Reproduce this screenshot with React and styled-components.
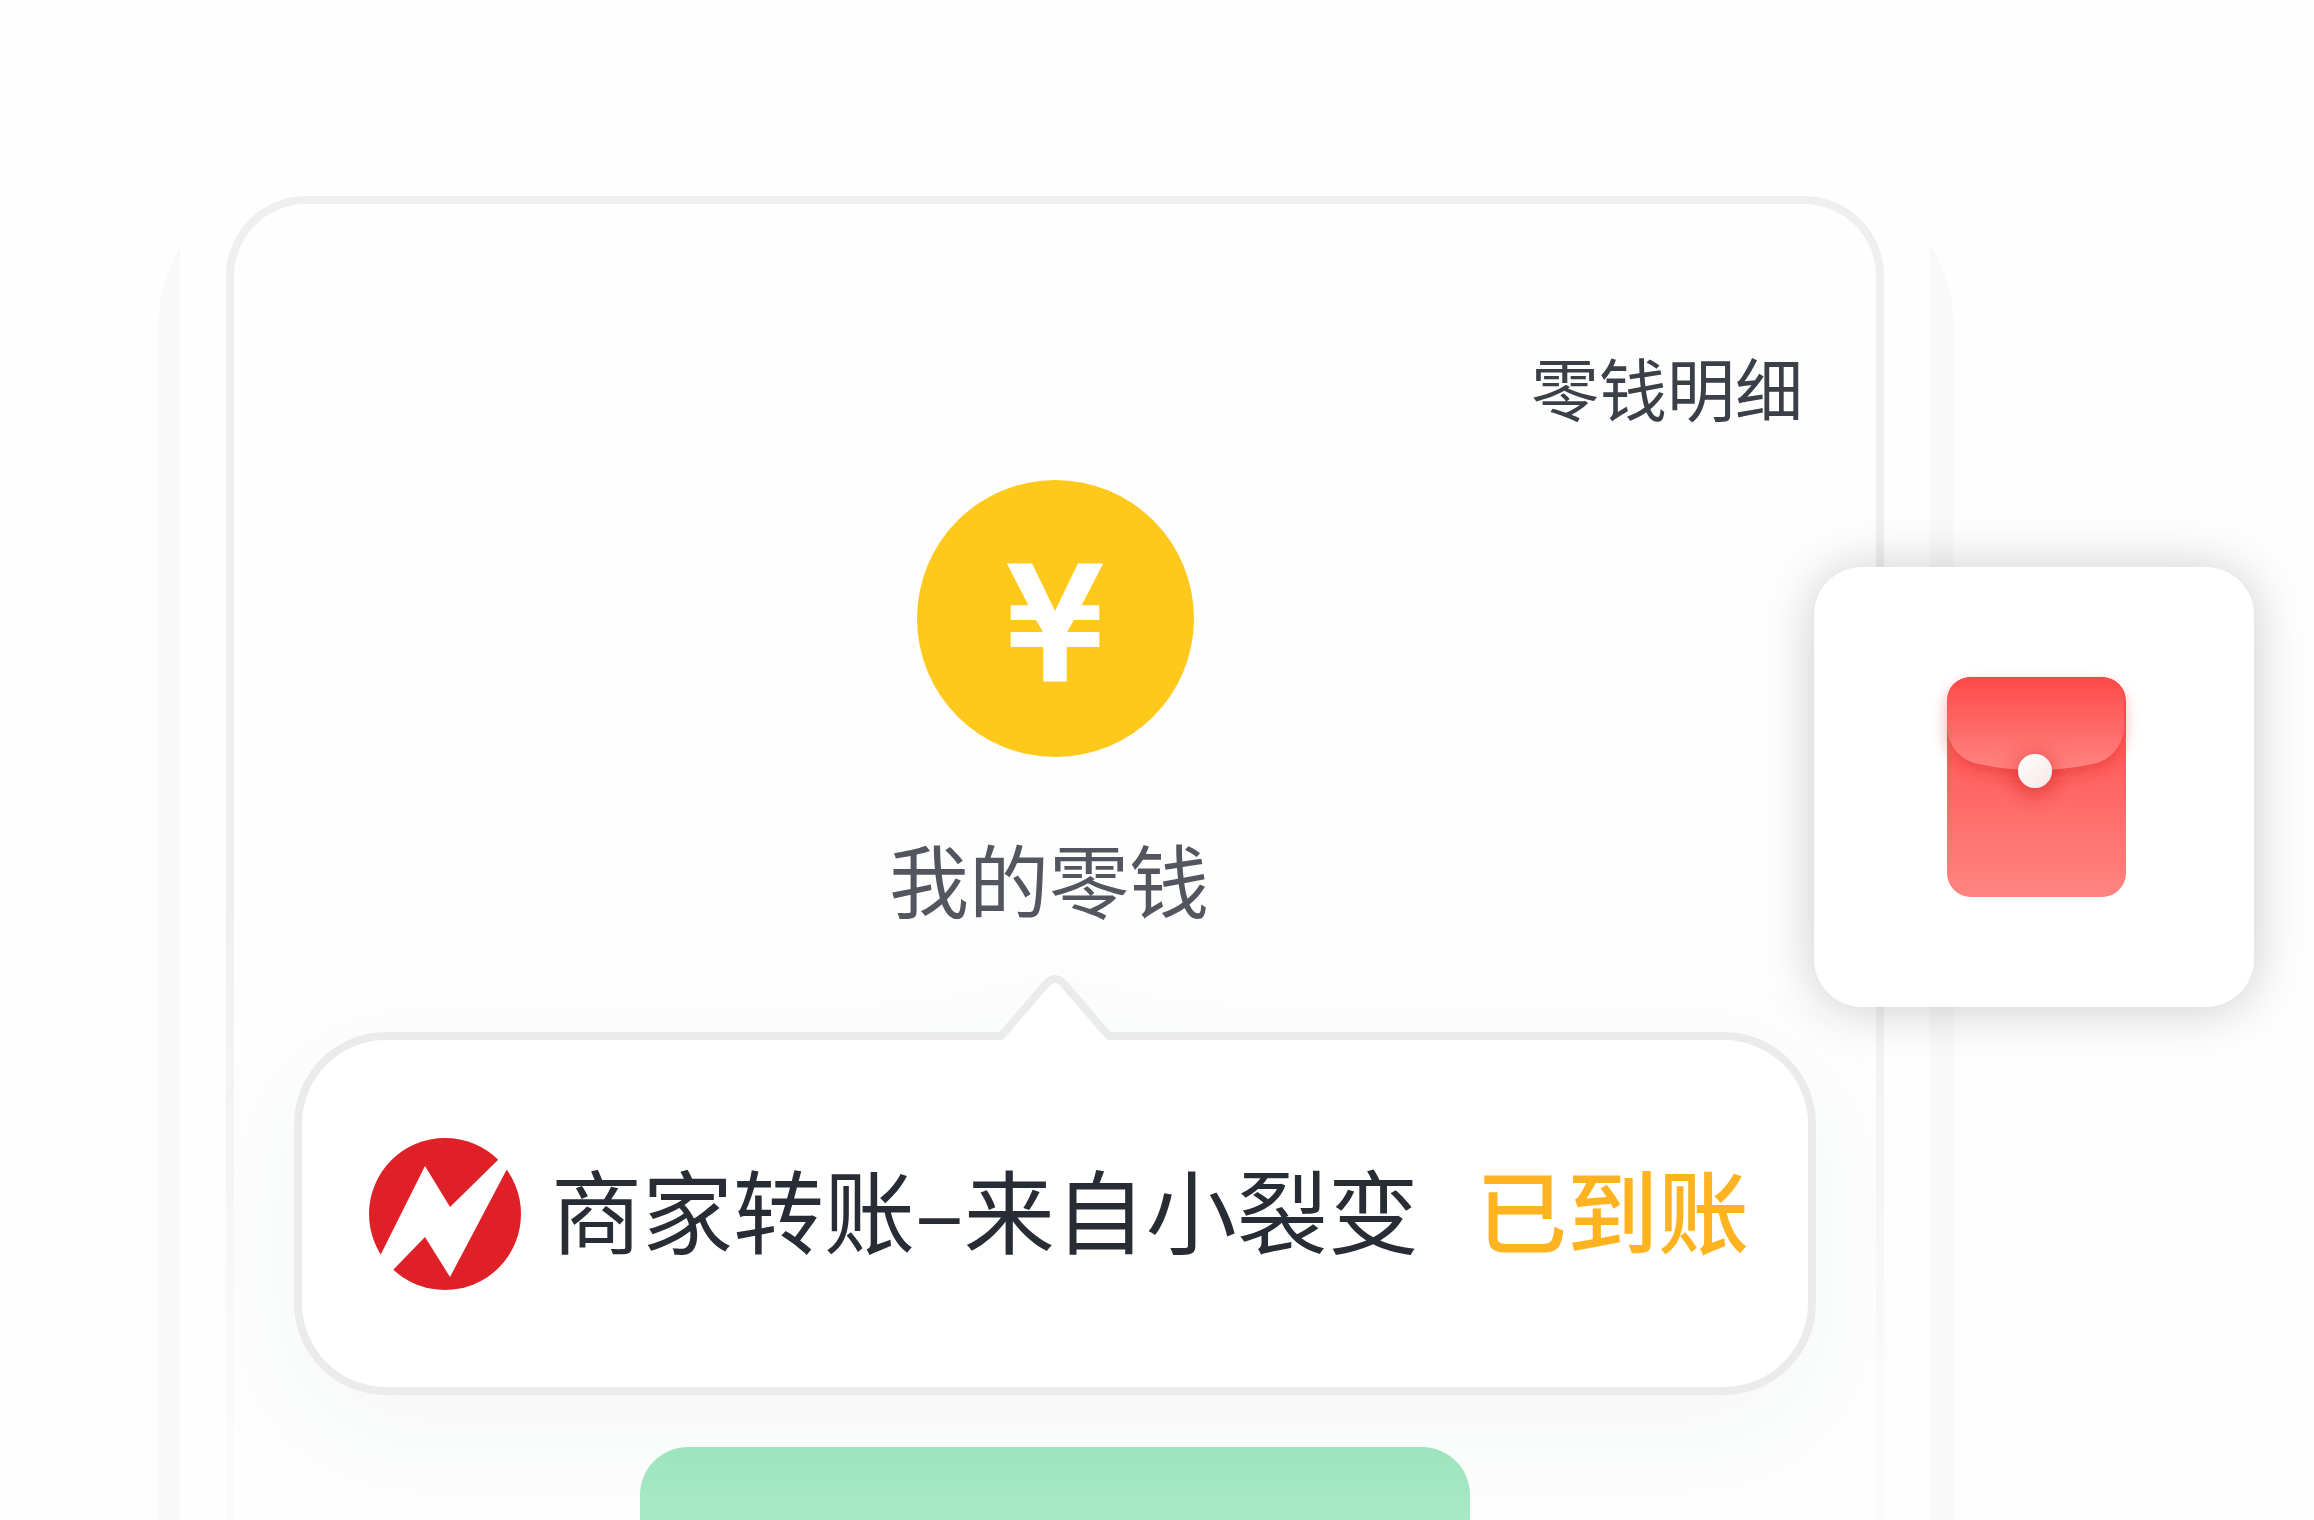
import styled, { createGlobalStyle } from 'styled-components';

export default function App() {
    return (
        <>
        <GlobalStyle />
        <Page>
            <Device>
                <Screen>
                    <DetailLink href="#detail">零钱明细</DetailLink>
                    <Coin>¥</Coin>
                    <Title>我的零钱</Title>
                    <Bubble>
                        <Tail viewBox="0 0 116 68" aria-hidden="true">
                            <path className="fill" d="M5 68 L5 62 L49 11 Q58 1 67 11 L111 62 L111 68 Z" />
                            <path className="line" d="M2 64 L5 62 L49 11 Q58 1 67 11 L111 62 L114 64" />
                        </Tail>
                        <MerchantLogo />
                        <Message>商家转账–来自小裂变</Message>
                        <Status>已到账</Status>
                    </Bubble>
                    <ActionButton type="button" aria-label="零钱" />
                </Screen>
                <PacketCard>
                    <RedPacket />
                </PacketCard>
            </Device>
        </Page>
        </>
    )
}

function MerchantLogo() {
    return (
        <Logo viewBox="0 0 152 152" aria-hidden="true">
            <circle cx="76" cy="76" r="76" fill="#df2127" />
            <path
                fill="#fff"
                d="M12 116 L56 28 L81 69 L130 21 L150 6 L138 31 L81 139 L56 99 L24 132 L4 150 Z"
            />
        </Logo>
    )
}

function RedPacket() {
    return (
        <Packet viewBox="0 0 180 222" aria-hidden="true">
            <defs>
                <linearGradient id="packet" x1="0" y1="0" x2="0" y2="1">
                    <stop offset="0" stopColor="#ff4949" />
                    <stop offset="1" stopColor="#ff8480" />
                </linearGradient>
                <linearGradient id="clasp" x1="0" y1="0" x2="1" y2="1">
                    <stop offset="0" stopColor="#ffffff" />
                    <stop offset="1" stopColor="#f7e6e6" />
                </linearGradient>
                <filter id="flapShadow" x="-30%" y="-30%" width="160%" height="180%">
                    <feDropShadow dx="0" dy="7" stdDeviation="7" floodColor="#d92b2b" floodOpacity="0.4" />
                </filter>
                <filter id="claspShadow" x="-150%" y="-150%" width="400%" height="400%">
                    <feDropShadow dx="0" dy="4" stdDeviation="12" floodColor="#c01818" floodOpacity="0.6" />
                </filter>
            </defs>
            <rect x="3" y="1" width="179" height="220" rx="24" fill="url(#packet)" />
            <path
                d="M27 1 H157 Q179 3 180 25 V48 C180 68 169 84 148 88 Q91 100 35 88 C14 84 3 68 3 48 V25 Q4 3 27 1 Z"
                fill="url(#packet)"
                filter="url(#flapShadow)"
            />
            <circle cx="91" cy="95" r="17" fill="url(#clasp)" filter="url(#claspShadow)" />
        </Packet>
    )
}


const GlobalStyle = createGlobalStyle`
    * {
        box-sizing: border-box;
    }
    body {
        margin: 0;
        background: #fefefe;
        font-family: "Noto Sans CJK SC", sans-serif;
    }
`

const Page = styled.main`
    display: flex;
    height: 100vh;
    padding: 168px 360px 0 158px;
    overflow: hidden;
`

const Device = styled.div`
    position: relative;
    flex: 1;
    padding: 28px 70px 0 68px;
    border-radius: 160px 160px 0 0;
    background: linear-gradient(90deg, #f9f9f9 22px, #fefefe 22px calc(100% - 24px), #f9f9f9 calc(100% - 24px));
`

const Screen = styled.section`
    display: flex;
    flex-direction: column;
    align-items: center;
    height: 100%;
    padding: 143px 60px 0;
    border: 8px solid transparent;
    border-bottom: 0;
    border-radius: 80px 80px 0 0;
    background:
        linear-gradient(#fefefe, #fefefe) padding-box,
        linear-gradient(180deg, #efefef 50%, #fafbfb 90%) border-box;
`

const DetailLink = styled.a`
    align-self: flex-end;
    flex-shrink: 0;
    margin-right: 13px;
    color: #3b4048;
    font-size: 68px;
    line-height: 80px;
    text-decoration: none;
`

const Coin = styled.div`
    display: flex;
    align-items: center;
    justify-content: center;
    flex-shrink: 0;
    width: 277px;
    height: 277px;
    margin-top: 53px;
    padding-top: 14px;
    border-radius: 50%;
    background: #ffc91b;
    color: #fff;
    font-family: "DejaVu Sans Mono", monospace;
    font-size: 162px;
    font-weight: 700;
    line-height: 1;
`

const Title = styled.h1`
    flex-shrink: 0;
    margin: 70px 12px 105px 0;
    color: #53565e;
    font-size: 80px;
    font-weight: 400;
    line-height: 100px;
`

const Bubble = styled.div`
    position: relative;
    display: flex;
    align-items: center;
    flex-shrink: 0;
    width: 100%;
    height: 363px;
    padding: 0 59px 0 67px;
    border: 8px solid #ebebeb;
    border-radius: 92px;
    background: #fff;
    filter: drop-shadow(0 36px 60px rgba(20, 60, 40, 0.04));
`

const Tail = styled.svg`
    position: absolute;
    top: -67px;
    left: calc(50% - 58px);
    width: 116px;
    height: 68px;
    .fill {
        fill: #fff;
    }
    .line {
        fill: none;
        stroke: #ebebeb;
        stroke-width: 8px;
    }
`

const Logo = styled.svg`
    flex-shrink: 0;
    width: 152px;
    height: 152px;
    margin-right: 30px;
`

const Message = styled.span`
    padding-bottom: 13px;
    color: #282c34;
    font-size: 91px;
    line-height: 120px;
    white-space: nowrap;
`

const Status = styled.strong`
    margin-left: auto;
    padding-bottom: 13px;
    color: #ffb320;
    font-size: 91px;
    font-weight: 500;
    line-height: 120px;
    white-space: nowrap;
`

const ActionButton = styled.button`
    position: relative;
    flex-shrink: 0;
    width: 830px;
    height: 160px;
    margin-top: 52px;
    border: 0;
    border-radius: 48px;
    background: linear-gradient(180deg, #9de4bd, #b4f0d0);
`

const PacketCard = styled.div`
    position: absolute;
    top: 399px;
    right: -300px;
    display: flex;
    align-items: center;
    justify-content: center;
    width: 440px;
    height: 440px;
    border-radius: 48px;
    background: #fff;
    box-shadow: 0 2px 52px rgba(0, 0, 0, 0.2);
`

const Packet = styled.svg`
    width: 180px;
    height: 222px;
    overflow: visible;
`
